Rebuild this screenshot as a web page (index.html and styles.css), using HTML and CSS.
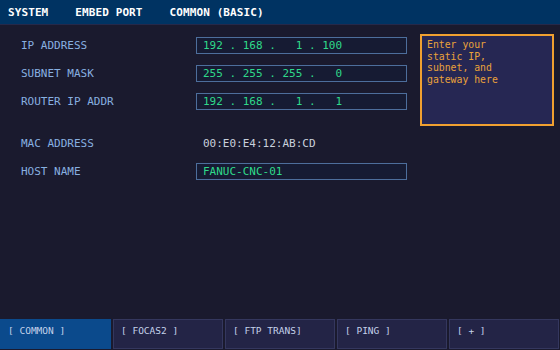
FILE: index.html
```html
<!DOCTYPE html>
<html lang="en">
<head>
  <meta charset="UTF-8" />
  <title>Embed Port - Common</title>
  <link rel="stylesheet" href="styles.css">
</head>
<body>
  <div class="screen">
    <div class="header">
      <span>SYSTEM</span>
      <span>EMBED PORT</span>
      <span>COMMON (BASIC)</span>
    </div>

    <div class="main">
      <div class="settings">
        <div class="group">
          <div class="label">IP ADDRESS</div>
          <div class="field">192 . 168 .   1 . 100</div>
          <div class="label">SUBNET MASK</div>
          <div class="field">255 . 255 . 255 .   0</div>
          <div class="label">ROUTER IP ADDR</div>
          <div class="field">192 . 168 .   1 .   1</div>
        </div>
        <div class="group second">
          <div class="label">MAC ADDRESS</div>
          <div class="value">00:E0:E4:12:AB:CD</div>
          <div class="label">HOST NAME</div>
          <div class="field">FANUC-CNC-01</div>
        </div>
      </div>

      <div class="help">Enter your<br>static IP,<br>subnet, and<br>gateway here</div>
    </div>

    <div class="tabs">
      <div class="tab active">[ COMMON ]</div>
      <div class="tab">[ FOCAS2 ]</div>
      <div class="tab">[ FTP TRANS]</div>
      <div class="tab">[ PING ]</div>
      <div class="tab">[ + ]</div>
    </div>
  </div>
</body>
</html>
```

FILE: styles.css
```css
* {
  margin: 0;
  padding: 0;
  box-sizing: border-box;
}

body {
  font-family: 'DejaVu Sans Mono', 'Liberation Mono', monospace;
  background: #1a1a2e;
  width: 560px;
  height: 350px;
  overflow: hidden;
}

.screen {
  display: flex;
  flex-direction: column;
  height: 350px;
}

.header {
  height: 25px;
  background: #003362;
  border-bottom: 1px solid #25294a;
  display: flex;
  align-items: center;
  gap: 27px;
  padding-left: 8px;
  color: #ffffff;
  font-size: 11px;
  font-weight: bold;
  letter-spacing: 0.1px;
}

.main {
  flex: 1;
  display: flex;
  align-items: flex-start;
  padding: 9px 0 0 21px;
}

.settings {
  margin-top: 3px;
}

.group {
  display: grid;
  grid-template-columns: 175px 211px;
  grid-auto-rows: 17px;
  row-gap: 11px;
  align-items: center;
  font-size: 11px;
}

.group.second {
  margin-top: 25px;
}

.label {
  color: #88b0e0;
}

.field {
  height: 17px;
  border: 1px solid #4d6e9c;
  background: #161b33;
  color: #2fd98a;
  padding-left: 6px;
  line-height: 15px;
  white-space: pre;
}

.value {
  color: #c8d0dc;
  padding-left: 7px;
  white-space: pre;
}

.help {
  width: 134px;
  height: 92px;
  margin-left: 13px;
  background: #262753;
  border: 2px solid #f0a030;
  color: #eaa23a;
  font-size: 9.8px;
  line-height: 11.7px;
  padding: 3px 5px;
}

.tabs {
  display: flex;
  gap: 2px;
  padding: 0 1px 1px 0;
  height: 31px;
}

.tab {
  width: 111px;
  background: #232446;
  border: 1px solid #34375e;
  color: #c4d2ea;
  font-size: 9.5px;
  line-height: 11px;
  padding: 5px 0 0 7px;
}

.tab.active {
  width: 112px;
  background: #0b4a8c;
  border-color: #0b4a8c;
}
```
